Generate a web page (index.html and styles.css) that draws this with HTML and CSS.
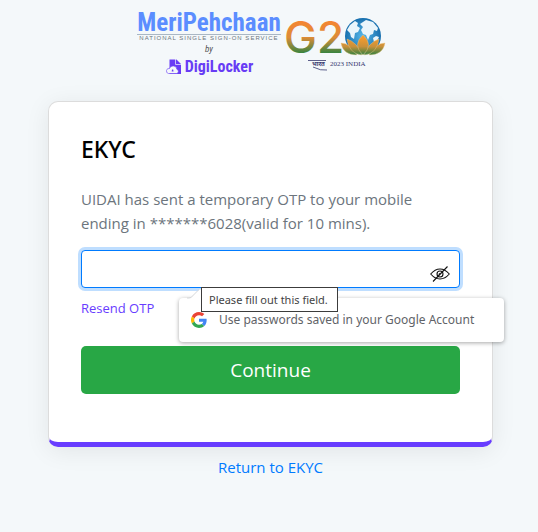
FILE: index.html
```html
<!DOCTYPE html>
<html lang="en">
<head>
<meta charset="utf-8">
<meta name="viewport" content="width=device-width, initial-scale=1">
<title>EKYC</title>
<link rel="stylesheet" href="styles.css">
</head>
<body>
<header class="brand">
  <div class="pehchaan">
    <div class="pehchaan-name">MeriPehchaan</div>
    <div class="pehchaan-tag">NATIONAL SINGLE SIGN-ON SERVICE</div>
    <div class="pehchaan-by">by</div>
    <div class="digilocker">
      <svg width="17" height="16" viewBox="0 0 17 16" aria-hidden="true">
        <path d="M4.500.5h7l4.500 4.500V15H4.500z" fill="#683cf5"/>
        <path d="M10.500 0v5.500H16" fill="none" stroke="#f4f8fa" stroke-width=".7"/>
        <path d="M3.500 14.500h8a2.200 2.200 0 0 0 .3-4.300A3.300 3.300 0 0 0 8.500 7 3.500 3.500 0 0 0 4.500 9.500a2.500 2.500 0 0 0-1 5z" fill="#f4f8fa" stroke="#683cf5" stroke-width=".6"/>
        <path d="M7 10.500h1.200l.3 2H6.700z" fill="#683cf5"/>
      </svg>
      <span>DigiLocker</span>
    </div>
  </div>
  <svg class="g20" width="99" height="58" viewBox="0 0 99 58" role="img" aria-label="G20 India 2023">
    <defs>
      <linearGradient id="flag" x1="0" y1="5" x2="0" y2="38" gradientUnits="userSpaceOnUse">
        <stop offset="0" stop-color="#f58532"/><stop offset=".5" stop-color="#dc8c38"/><stop offset="1" stop-color="#2f8440"/>
      </linearGradient>
      <linearGradient id="petal" x1="0" y1="22" x2="0" y2="39" gradientUnits="userSpaceOnUse">
        <stop offset="0" stop-color="#f39a2f"/><stop offset=".5" stop-color="#c9903a"/><stop offset="1" stop-color="#2e8140"/>
      </linearGradient>
      <radialGradient id="sea"><stop offset="0" stop-color="#58b9ea"/><stop offset="1" stop-color="#176fae"/></radialGradient>
    </defs>
    <text class="g20-letters" x="-2" y="37" fill="url(#flag)">G2</text>
    <circle cx="77" cy="20" r="18" fill="url(#sea)"/>
    <path d="M61 14l3-5 5-4 3 2-1 3 3 2-2 4-3 1-1 6-3-2-1-4zM74 8l6-4 7 2 5 6-1 3-3-1-1 4-3 1-2 5-2-5-3-1-2-4 2-3zM87 22l3-2 3 1-2 4-3 1z" fill="#e9f5fb"/>
    <g fill="url(#petal)" stroke="#edc98b" stroke-width=".4">
      <path d="M55 27q9 0 16 12-14 0-16-12zM99 27q-9 0-16 12 14 0 16-12z"/>
      <path d="M61 23q10 3 15 16-13-1-15-16zM93 23q-10 3-15 16 13-1 15-16z"/>
      <path d="M77 19q11 10 0 20-11-10 0-20z"/>
    </g>
    <text class="g20-hindi" x="26" y="50">भारत</text>
    <path d="M22 44.500h18M27 51q8 4 14 3" fill="none" stroke="#35376f" stroke-width=".8"/>
    <text class="g20-year" x="44" y="50">2023 INDIA</text>
  </svg>
</header>
<main class="page">
  <form class="card">
    <h1>EKYC</h1>
    <p class="message">UIDAI has sent a temporary OTP to your mobile ending in *******6028(valid for 10 mins).</p>
    <div class="field">
      <input id="otp" type="password" aria-label="OTP" required>
      <button class="reveal" type="button" aria-label="Show OTP">
        <svg width="20" height="16" viewBox="0 0 20 16" fill="none" stroke="#111" stroke-width="1.100">
          <path d="M.7 8Q5 3 10 3t9.300 5Q15 13 10 13T.7 8z"/><circle cx="10" cy="8" r="3"/><path d="M9 8.500a1 1 0 0 1 1-1M3 15.500 17.500.5"/>
        </svg>
      </button>
      <div class="suggestion">
        <svg class="suggestion-tip" width="22" height="10" viewBox="0 0 22 10" aria-hidden="true"><path d="M0 10 4 9 13 0 22 10z" fill="#fff"/><path d="M0 9h2l2-.5L12 .5" fill="none" stroke="#d5d7d9"/></svg>
        <svg width="16" height="16" viewBox="0 0 48 48" aria-hidden="true">
          <path fill="#EA4335" d="M24 9.500c3.540 0 6.710 1.220 9.210 3.600l6.850-6.850C35.900 2.380 30.470 0 24 0 14.620 0 6.510 5.380 2.560 13.220l7.980 6.190C12.430 13.720 17.740 9.500 24 9.500z"/>
          <path fill="#4285F4" d="M46.980 24.550c0-1.570-.15-3.090-.38-4.550H24v9.020h12.940c-.58 2.960-2.260 5.480-4.780 7.180l7.730 6c4.510-4.180 7.090-10.360 7.090-17.650z"/>
          <path fill="#FBBC05" d="M10.530 28.590a14.500 14.500 0 0 1 0-9.180l-7.980-6.190a24 24 0 0 0 0 21.560z"/>
          <path fill="#34A853" d="M24 48c6.480 0 11.930-2.130 15.890-5.810l-7.730-6c-2.150 1.450-4.920 2.300-8.160 2.300-6.260 0-11.570-4.220-13.470-9.910l-7.980 6.190C6.510 42.620 14.620 48 24 48z"/>
        </svg>
        <span>Use passwords saved in your Google Account</span>
      </div>
      <div class="tooltip" role="tooltip">Please fill out this field.</div>
    </div>
    <a class="resend" href="#">Resend OTP</a>
    <button class="continue" type="submit">Continue</button>
  </form>
  <a class="return" href="#">Return to EKYC</a>
</main>
</body>
</html>
```
FILE: styles.css
```css
* { box-sizing: border-box; }
body {
  margin: 0;
  min-height: 100vh;
  background: #f4f8fa;
  font-family: "Open Sans", sans-serif;
  font-size: 15px;
  line-height: 24px;
  color: #6c757d;
}
a { text-decoration: none; }
.brand {
  display: flex;
  justify-content: center;
  gap: 5px;
  padding: 12px 16px 0 0;
}
.pehchaan {
  display: flex;
  flex-direction: column;
  align-items: center;
  font-family: "Roboto Condensed", Roboto, sans-serif;
}
.pehchaan-name {
  color: #5b8dff;
  font-size: 25px;
  font-weight: 700;
  line-height: 22px;
  border-bottom: 1px solid #a9b7c4;
}
.pehchaan-tag {
  font-family: "Liberation Sans", sans-serif;
  font-size: 6px;
  letter-spacing: 1px;
  line-height: 7px;
  white-space: nowrap;
}
.pehchaan-by {
  color: #555;
  font-size: 9px;
  font-style: italic;
  line-height: 14px;
}
.digilocker {
  display: flex;
  align-items: center;
  gap: 3px;
  color: #683cf5;
  font-size: 16px;
  font-weight: 700;
  line-height: 22px;
}
.g20 { margin-top: 4px; overflow: visible; }
.g20-letters { font: 500 44px Inter, sans-serif; }
.g20-hindi { font: 700 6px "Noto Sans", sans-serif; fill: #35376f; }
.g20-year { font: 400 7px "Liberation Serif", serif; fill: #35376f; }
.page {
  display: flex;
  flex-direction: column;
  padding: 23px 45px 0 48px;
}
.card {
  display: flex;
  flex-direction: column;
  padding: 31px 32px 48px;
  background: #fff;
  border: 1px solid #dcdcdc;
  border-bottom: 5px solid #683cff;
  border-radius: 10px;
  box-shadow: 0 4px 24px rgba(0, 0, 0, .08);
}
h1 {
  margin: 0 0 22px;
  color: #000;
  font-family: "Noto Sans", sans-serif;
  font-size: 23px;
  font-weight: 500;
  line-height: 32px;
}
.message { margin: 0 0 15px; }
.field { position: relative; }
.field input {
  display: block;
  width: 100%;
  height: 38px;
  padding: 6px 44px 6px 12px;
  border: 1px solid #007bff;
  border-radius: 4px;
  outline: 0;
  box-shadow: 0 0 0 3px #bfdeff;
  font: inherit;
}
.reveal {
  position: absolute;
  right: 10px;
  top: 16px;
  display: flex;
  padding: 0;
  border: 0;
  background: none;
}
.suggestion {
  position: absolute;
  left: 98px;
  top: 48px;
  display: flex;
  align-items: center;
  gap: 12px;
  width: 325px;
  height: 44px;
  padding: 0 12px;
  border-radius: 4px;
  background: #fff;
  box-shadow: 0 1px 4px rgba(0, 0, 0, .35);
  color: #5f6368;
  font-family: "Noto Sans", sans-serif;
  font-size: 12px;
  white-space: nowrap;
}
.suggestion-tip { position: absolute; left: 8px; top: -9px; }
.tooltip {
  position: absolute;
  left: 120px;
  top: 37px;
  padding: 0 9px 0 7px;
  border: 1px solid #3c3c3c;
  background: #fff;
  color: #444;
  font-family: "Noto Sans", sans-serif;
  font-size: 11px;
  line-height: 23px;
  white-space: nowrap;
}
.resend {
  align-self: flex-start;
  margin: 8px 0 26px;
  color: #683cff;
  font-size: 13px;
}
.continue {
  height: 48px;
  border: 0;
  border-radius: 5px;
  background: #28a745;
  color: #fff;
  font: 400 19px "Open Sans", sans-serif;
}
.return {
  align-self: center;
  margin-top: 8px;
  color: #007bff;
}
```
